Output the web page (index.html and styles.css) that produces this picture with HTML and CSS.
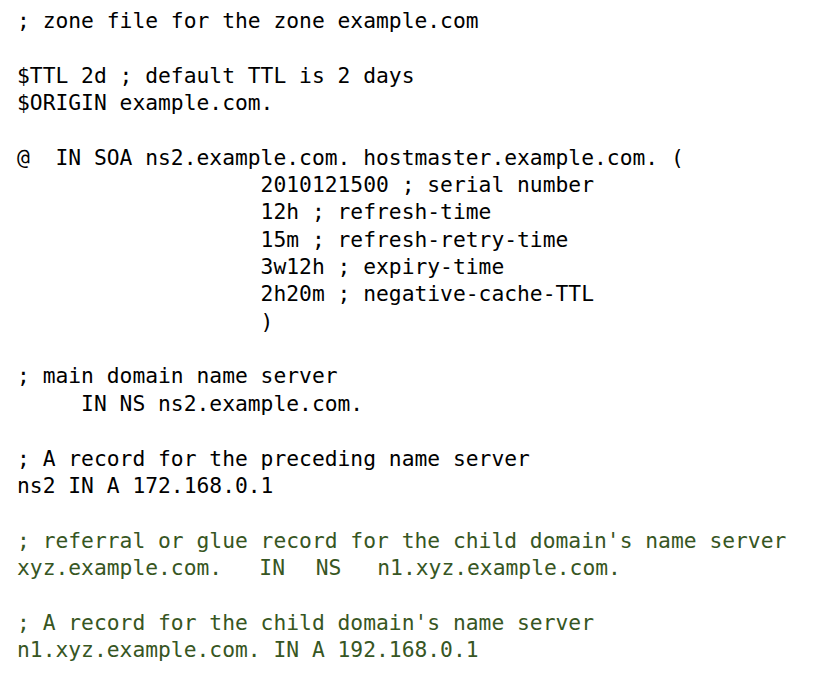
FILE: index.html
```html
<!DOCTYPE html>
<html>
<head>
<meta charset="utf-8">
<link rel="stylesheet" href="styles.css">
</head>
<body>
<pre class="zone">; zone file for the zone example.com

$TTL 2d ; default TTL is 2 days
$ORIGIN example.com.

@  IN SOA ns2.example.com. hostmaster.example.com. (
                   2010121500 ; serial number
                   12h ; refresh-time
                   15m ; refresh-retry-time
                   3w12h ; expiry-time
                   2h20m ; negative-cache-TTL
                   )

; main domain name server
     IN NS ns2.example.com.

; A record for the preceding name server
ns2 IN A 172.168.0.1

<span class="green">; referral or glue record for the child domain's name server</span>
<span class="green">xyz.example.com.</span><span class="green g1">IN</span><span class="green g2">NS</span><span class="green g3">n1.xyz.example.com.</span>

<span class="green">; A record for the child domain's name server</span>
<span class="green">n1.xyz.example.com. IN A 192.168.0.1</span></pre>
</body>
</html>
```
FILE: styles.css
```css
html, body {
  margin: 0;
  padding: 0;
  background: #ffffff;
}
.zone {
  margin: 0;
  padding: 7px 0 0 17px;
  font-family: "DejaVu Sans Mono", "Liberation Mono", monospace;
  font-size: 21.3px;
  line-height: 27.35px;
  color: #000000;
  white-space: pre;
}
.green {
  color: #375623;
}
.g1 { margin-left: 2.9ch; }
.g2 { margin-left: 2.4ch; }
.g3 { margin-left: 2.8ch; }
```
